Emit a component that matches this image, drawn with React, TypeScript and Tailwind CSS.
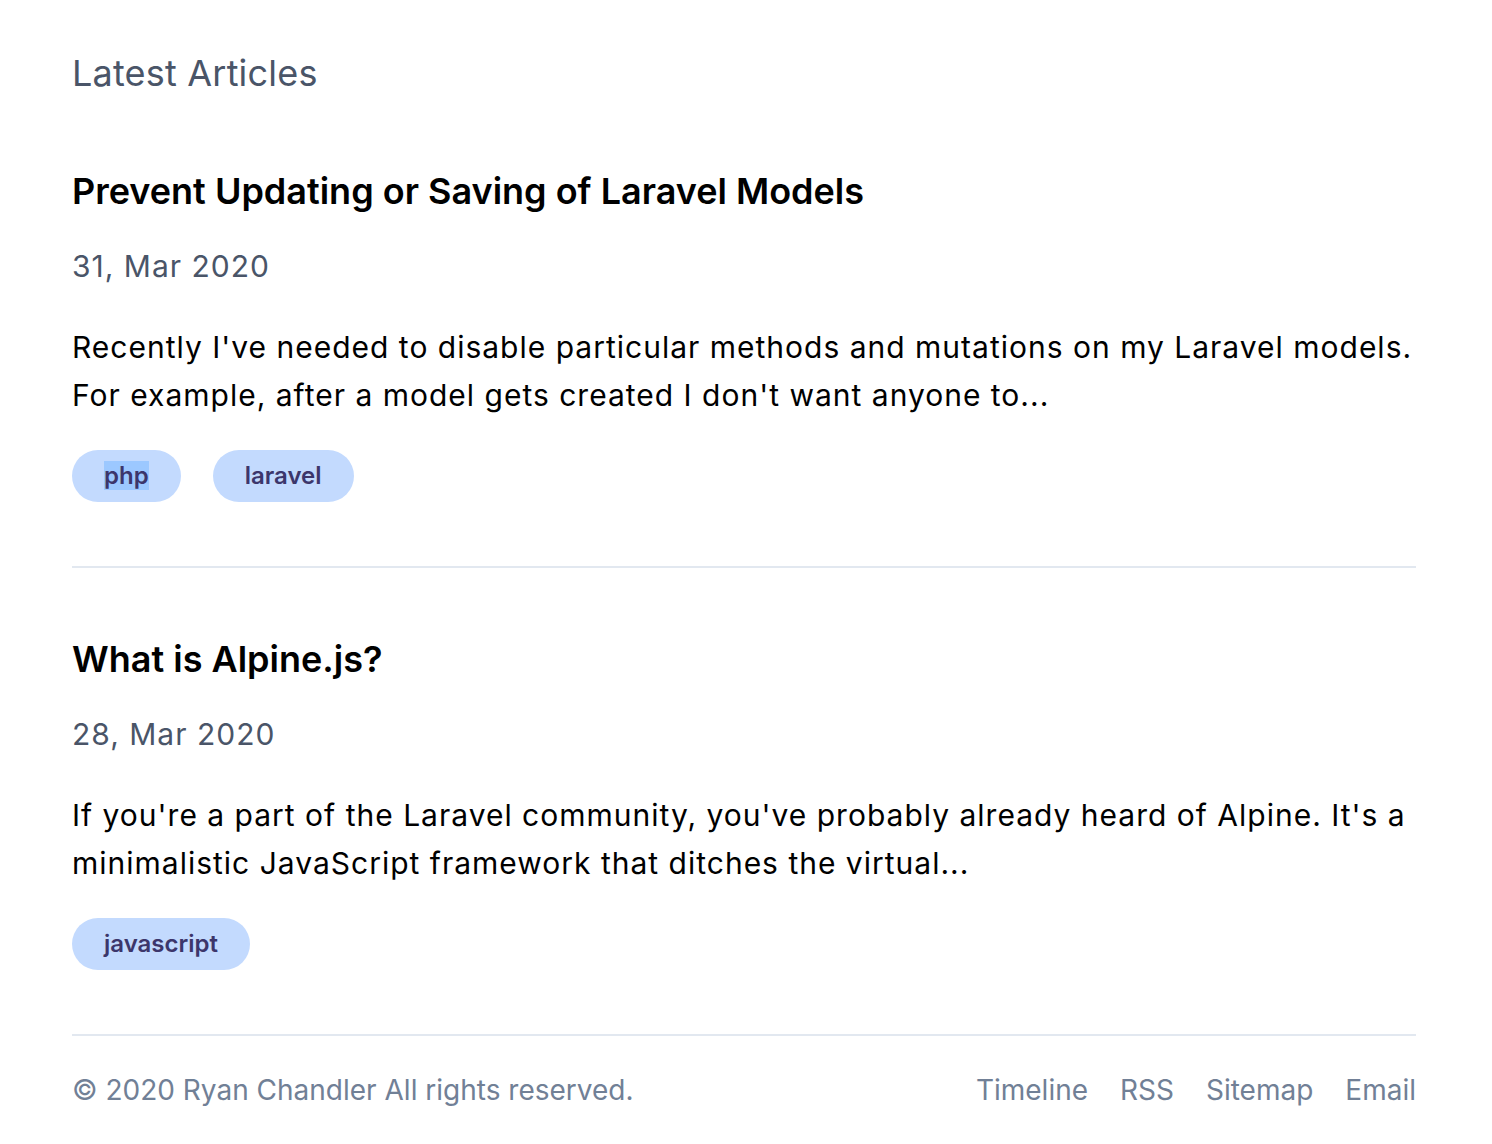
const articles = [
  {
    title: "Prevent Updating or Saving of Laravel Models",
    date: "31, Mar 2020",
    excerpt:
      "Recently I've needed to disable particular methods and mutations on my Laravel models. For example, after a model gets created I don't want anyone to...",
    tags: ["php", "laravel"],
  },
  {
    title: "What is Alpine.js?",
    date: "28, Mar 2020",
    excerpt:
      "If you're a part of the Laravel community, you've probably already heard of Alpine. It's a minimalistic JavaScript framework that ditches the virtual...",
    tags: ["javascript"],
  },
];

const links = ["Timeline", "RSS", "Sitemap", "Email"];

export default function App() {
  return (
    <div className="min-h-screen bg-white pt-[46px] font-['Inter',sans-serif] antialiased">
      <div className="ml-[72px] w-[1344px]">
        <h1 className="text-[36px] leading-[54px] font-normal tracking-[0.2px] text-[#4a5568]">Latest Articles</h1>

        <div className="mt-[64px]">
          {articles.map((article) => (
            <article key={article.title} className="mb-[64px] border-b-2 border-[#e2e8f0] pb-[64px] last:mb-0">
              <h2 className="text-[36px] leading-[54px] font-semibold text-black">{article.title}</h2>
              <p className="mt-[28px] text-[30px] leading-[40px] tracking-[1px] text-[#4a5568]">{article.date}</p>
              <p className="mt-[37px] text-[30px] leading-[48px] tracking-[1px] text-black">{article.excerpt}</p>
              <div className="mt-[31px] flex gap-8">
                {article.tags.map((tag) => (
                  <span
                    key={tag}
                    className="rounded-full bg-[#c3dafe] px-8 py-2 text-[24px] leading-[36px] font-semibold text-[#3c366b]"
                  >
                    {tag === "php" ? <span className="bg-[#9cc8ff]">{tag}</span> : tag}
                  </span>
                ))}
              </div>
            </article>
          ))}
        </div>

        <footer className="flex items-center justify-between py-[34px] text-[28px] leading-[40px] text-[#718096]">
          <p>© 2020 Ryan Chandler All rights reserved.</p>
          <nav className="flex gap-8">
            {links.map((link) => (
              <a key={link} href="#">
                {link}
              </a>
            ))}
          </nav>
        </footer>
      </div>
    </div>
  );
}
